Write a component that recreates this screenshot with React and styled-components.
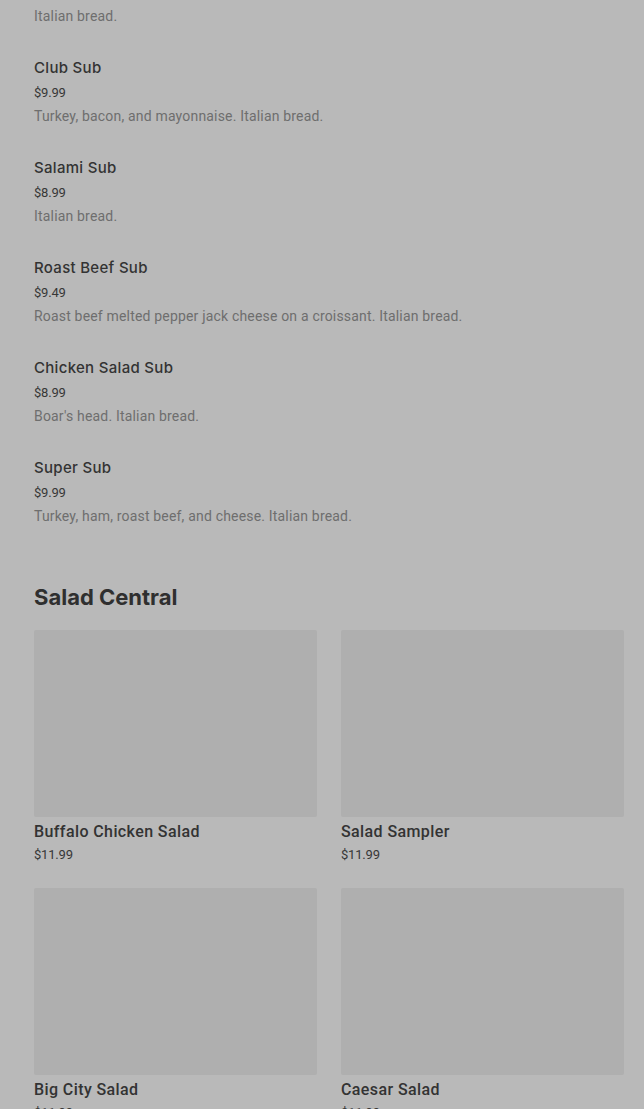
import React from "react";
import styled, { createGlobalStyle } from "styled-components";

const subs = [
  { name: "Italian Sub", price: "$8.99", desc: "Italian bread." },
  { name: "Club Sub", price: "$9.99", desc: "Turkey, bacon, and mayonnaise. Italian bread." },
  { name: "Salami Sub", price: "$8.99", desc: "Italian bread." },
  { name: "Roast Beef Sub", price: "$9.49", desc: "Roast beef melted pepper jack cheese on a croissant. Italian bread." },
  { name: "Chicken Salad Sub", price: "$8.99", desc: "Boar's head. Italian bread." },
  { name: "Super Sub", price: "$9.99", desc: "Turkey, ham, roast beef, and cheese. Italian bread." },
];

const salads = [
  { name: "Buffalo Chicken Salad", price: "$11.99" },
  { name: "Salad Sampler", price: "$11.99" },
  { name: "Big City Salad", price: "$11.99" },
  { name: "Caesar Salad", price: "$11.99" },
];

const App = () => {
  return (
    <>
      <GlobalStyle />
      <Page>
        <ItemList>
          {subs.map((s) => (
            <Item key={s.name}>
              <ItemName>{s.name}</ItemName>
              <Price>{s.price}</Price>
              <Desc>{s.desc}</Desc>
            </Item>
          ))}
        </ItemList>
        <SectionTitle>Salad Central</SectionTitle>
        <CardGrid>
          {salads.map((s) => (
            <Card key={s.name}>
              <Thumb />
              <CardName>{s.name}</CardName>
              <CardPrice>{s.price}</CardPrice>
            </Card>
          ))}
        </CardGrid>
      </Page>
    </>
  );
};

export default App;

const GlobalStyle = createGlobalStyle`
  html, body {
    margin: 0;
    padding: 0;
    background: #b9b9b9;
    overflow: hidden;
  }
  body {
    font-family: Roboto, "Liberation Sans", sans-serif;
  }
`;

const Page = styled.div`
  margin-top: -42px;
  padding: 0 20px 0 34px;
  height: 1152px;
  overflow: hidden;
`;

const ItemList = styled.div`
  display: flex;
  flex-direction: column;
  gap: 33px;
`;

const Item = styled.div`
  display: flex;
  flex-direction: column;
`;

const ItemName = styled.div`
  font-family: Inter, Roboto, sans-serif;
  font-size: 15px;
  font-weight: 500;
  line-height: 20px;
  letter-spacing: 0.3px;
  color: #333333;
`;

const Price = styled.div`
  margin-top: 6px;
  font-size: 13px;
  line-height: 18px;
  color: #373737;
  letter-spacing: -0.2px;
`;

const Desc = styled.div`
  margin-top: 5px;
  font-size: 14px;
  line-height: 18px;
  letter-spacing: 0.18px;
  color: #6e6e6e;
`;

const SectionTitle = styled.h2`
  margin: 58px 0 19px;
  font-family: Inter, Roboto, sans-serif;
  font-size: 22px;
  line-height: 28px;
  font-weight: 700;
  letter-spacing: 0;
  color: #2f2f2f;
`;

const CardGrid = styled.div`
  display: grid;
  grid-template-columns: 1fr 1fr;
  column-gap: 24px;
  row-gap: 24px;
`;

const Card = styled.div`
  display: flex;
  flex-direction: column;
`;

const Thumb = styled.div`
  height: 187px;
  background: #afafaf;
  border-radius: 2px;
`;

const CardName = styled.div`
  margin-top: 5px;
  font-size: 16px;
  font-weight: 500;
  line-height: 20px;
  letter-spacing: 0.4px;
  color: #333333;
`;

const CardPrice = styled.div`
  margin-top: 4px;
  font-size: 13px;
  line-height: 18px;
  color: #373737;
  letter-spacing: -0.2px;
`;
